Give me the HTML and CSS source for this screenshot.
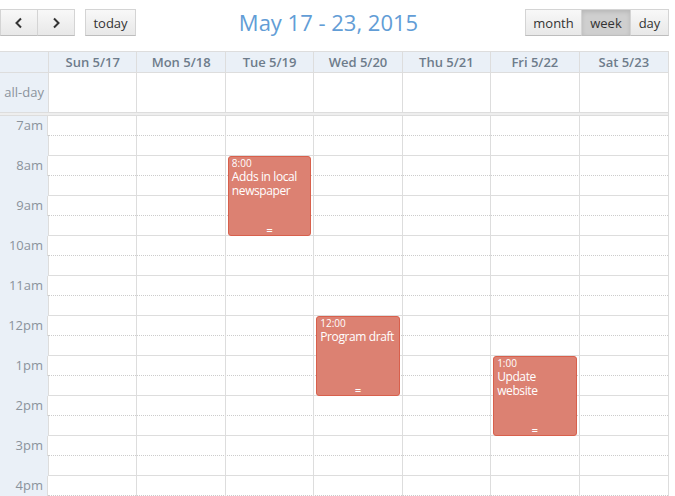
FILE: index.html
```html
<!DOCTYPE html>
<html>
<head>
    <title>Calendar - week</title>
    <link rel="stylesheet" href="styles.css">
</head>
<body>

<div class="toolbar">
    <div class="tb-left">
        <div class="btn-group">
            <button class="btn btn-icon">
                <svg width="10" height="12" viewBox="0 0 10 12"><path d="M7 1.5 L2.5 6 L7 10.5" fill="none" stroke="#333" stroke-width="2"/></svg>
            </button>
            <button class="btn btn-icon">
                <svg width="10" height="12" viewBox="0 0 10 12"><path d="M3 1.5 L7.5 6 L3 10.5" fill="none" stroke="#333" stroke-width="2"/></svg>
            </button>
        </div>
        <button class="btn btn-today">today</button>
    </div>
    <h2 class="title">May 17 - 23, 2015</h2>
    <div class="btn-group">
        <button class="btn btn-month">month</button>
        <button class="btn btn-week btn-active">week</button>
        <button class="btn btn-day">day</button>
    </div>
</div>

<div class="calendar">
    <div class="head-row">
        <div class="axis"></div>
        <div class="day-head">Sun 5/17</div>
        <div class="day-head">Mon 5/18</div>
        <div class="day-head">Tue 5/19</div>
        <div class="day-head">Wed 5/20</div>
        <div class="day-head">Thu 5/21</div>
        <div class="day-head">Fri 5/22</div>
        <div class="day-head">Sat 5/23</div>
    </div>
    <div class="allday-row">
        <div class="axis allday-label">all-day</div>
        <div class="allday-cell"></div>
        <div class="allday-cell"></div>
        <div class="allday-cell"></div>
        <div class="allday-cell"></div>
        <div class="allday-cell"></div>
        <div class="allday-cell"></div>
        <div class="allday-cell"></div>
    </div>
    <div class="divider"></div>

    <div class="time-grid">
        <div class="slats">
            <div class="slat hour"><div class="axis slot-label">7am</div><div class="slot-line"></div></div>
            <div class="slat"><div class="axis"></div><div class="slot-line"></div></div>
            <div class="slat hour"><div class="axis slot-label">8am</div><div class="slot-line"></div></div>
            <div class="slat"><div class="axis"></div><div class="slot-line"></div></div>
            <div class="slat hour"><div class="axis slot-label">9am</div><div class="slot-line"></div></div>
            <div class="slat"><div class="axis"></div><div class="slot-line"></div></div>
            <div class="slat hour"><div class="axis slot-label">10am</div><div class="slot-line"></div></div>
            <div class="slat"><div class="axis"></div><div class="slot-line"></div></div>
            <div class="slat hour"><div class="axis slot-label">11am</div><div class="slot-line"></div></div>
            <div class="slat"><div class="axis"></div><div class="slot-line"></div></div>
            <div class="slat hour"><div class="axis slot-label">12pm</div><div class="slot-line"></div></div>
            <div class="slat"><div class="axis"></div><div class="slot-line"></div></div>
            <div class="slat hour"><div class="axis slot-label">1pm</div><div class="slot-line"></div></div>
            <div class="slat"><div class="axis"></div><div class="slot-line"></div></div>
            <div class="slat hour"><div class="axis slot-label">2pm</div><div class="slot-line"></div></div>
            <div class="slat"><div class="axis"></div><div class="slot-line"></div></div>
            <div class="slat hour"><div class="axis slot-label">3pm</div><div class="slot-line"></div></div>
            <div class="slat"><div class="axis"></div><div class="slot-line"></div></div>
            <div class="slat hour"><div class="axis slot-label">4pm</div><div class="slot-line"></div></div>
            <div class="slat"><div class="axis"></div><div class="slot-line"></div></div>
        </div>

        <div class="columns">
            <div class="axis-gap"></div>
            <div class="day-col"></div>
            <div class="day-col"></div>
            <div class="day-col">
                <div class="event" style="top: 40px; height: 80px;">
                    <div class="event-time">8:00</div>
                    <div class="event-title">Adds in local newspaper</div>
                    <div class="event-resizer">=</div>
                </div>
            </div>
            <div class="day-col">
                <div class="event" style="top: 200px; height: 80px;">
                    <div class="event-time">12:00</div>
                    <div class="event-title">Program draft</div>
                    <div class="event-resizer">=</div>
                </div>
            </div>
            <div class="day-col"></div>
            <div class="day-col">
                <div class="event" style="top: 240px; height: 80px;">
                    <div class="event-time">1:00</div>
                    <div class="event-title">Update website</div>
                    <div class="event-resizer">=</div>
                </div>
            </div>
            <div class="day-col"></div>
        </div>
    </div>
</div>

</body>
</html>
```

FILE: styles.css
```css
body {
    margin: 0;
    font-family: "Open Sans", "Liberation Sans", sans-serif;
    background: #fff;
    width: 669px;
    overflow: hidden;
}

/* toolbar */
.toolbar {
    display: flex;
    align-items: flex-start;
    justify-content: space-between;
    padding-top: 9px;
    height: 42px;
    box-sizing: border-box;
}
.tb-left {
    display: flex;
    gap: 10px;
}
.btn-group {
    display: flex;
}
.btn {
    height: 27px;
    padding: 0;
    font-family: inherit;
    font-size: 13px;
    color: #333;
    background: linear-gradient(#f8f8f8, #e8e8e8);
    border: 1px solid #d4d4d4;
    border-bottom-color: #bdbdbd;
    margin: 0;
    cursor: pointer;
}
.btn-group .btn + .btn {
    margin-left: -1px;
}
.btn-icon {
    width: 38px;
    display: flex;
    align-items: center;
    justify-content: center;
}
.btn-today {
    width: 51px;
}
.btn-month {
    width: 57px;
}
.btn-week {
    width: 50px;
}
.btn-day {
    width: 39px;
}
.btn-active {
    background: #cfcfcf;
    box-shadow: inset 0 2px 4px rgba(0, 0, 0, 0.12);
}
.title {
    margin: 0 0 0 -4px;
    font-weight: normal;
    font-size: 22px;
    line-height: 26px;
    color: #629dd6;
}

/* grid */
.calendar {
    border: 1px solid #ddd;
    border-left: none;
    margin-top: 9px;
}
.head-row, .allday-row {
    display: grid;
    grid-template-columns: 49px repeat(7, 1fr);
}
.axis {
    background: #eaf0f7;
    border-right: 1px solid #ddd;
}
.head-row {
    height: 20px;
    background: #eaf0f7;
    border-bottom: 1px solid #ddd;
}
.day-head {
    font-size: 13px;
    font-weight: 600;
    color: #6e7c8b;
    text-align: center;
    line-height: 20px;
    border-right: 1px solid #ddd;
}
.day-head:last-child, .allday-cell:last-child, .day-col:last-child {
    border-right: none;
}
.allday-row {
    height: 39px;
}
.allday-label {
    font-size: 13px;
    color: #8a939c;
    text-align: right;
    padding-right: 4px;
    line-height: 39px;
}
.allday-cell {
    border-right: 1px solid #ddd;
}
.divider {
    height: 2px;
    background: #eee;
    border-top: 1px solid #ddd;
    border-bottom: 1px solid #ddd;
}

.time-grid {
    position: relative;
    height: 381px;
    overflow: hidden;
}
.slat {
    display: flex;
    height: 20px;
}
.slat .axis {
    width: 48px;
    flex-shrink: 0;
}
.slot-label {
    font-size: 13px;
    color: #8a939c;
    text-align: right;
    padding-right: 4px;
    box-sizing: border-box;
    line-height: 19px;
}
.slot-line {
    flex: 1;
    border-bottom: 1px dotted #ccc;
}
.slat.hour + .slat .slot-line {
    border-bottom: 1px solid #ddd;
}

.columns {
    position: absolute;
    top: 0;
    left: 0;
    right: 0;
    bottom: 0;
    display: grid;
    grid-template-columns: 49px repeat(7, 1fr);
}
.day-col {
    position: relative;
    border-right: 1px solid #ddd;
}

.event {
    position: absolute;
    left: 2px;
    right: 2px;
    box-sizing: border-box;
    background: #dc8172;
    border: 1px solid #d8604c;
    border-radius: 3px;
    color: #fff;
    padding: 0 3px;
    overflow: hidden;
}
.event-time {
    font-size: 10px;
    line-height: 13px;
}
.event-title {
    font-size: 12px;
    line-height: 14px;
    letter-spacing: -0.4px;
}
.event-resizer {
    position: absolute;
    bottom: -2px;
    left: 0;
    right: 0;
    text-align: center;
    font-family: "DejaVu Sans Mono", monospace;
    font-size: 10px;
    line-height: 12px;
}
```
